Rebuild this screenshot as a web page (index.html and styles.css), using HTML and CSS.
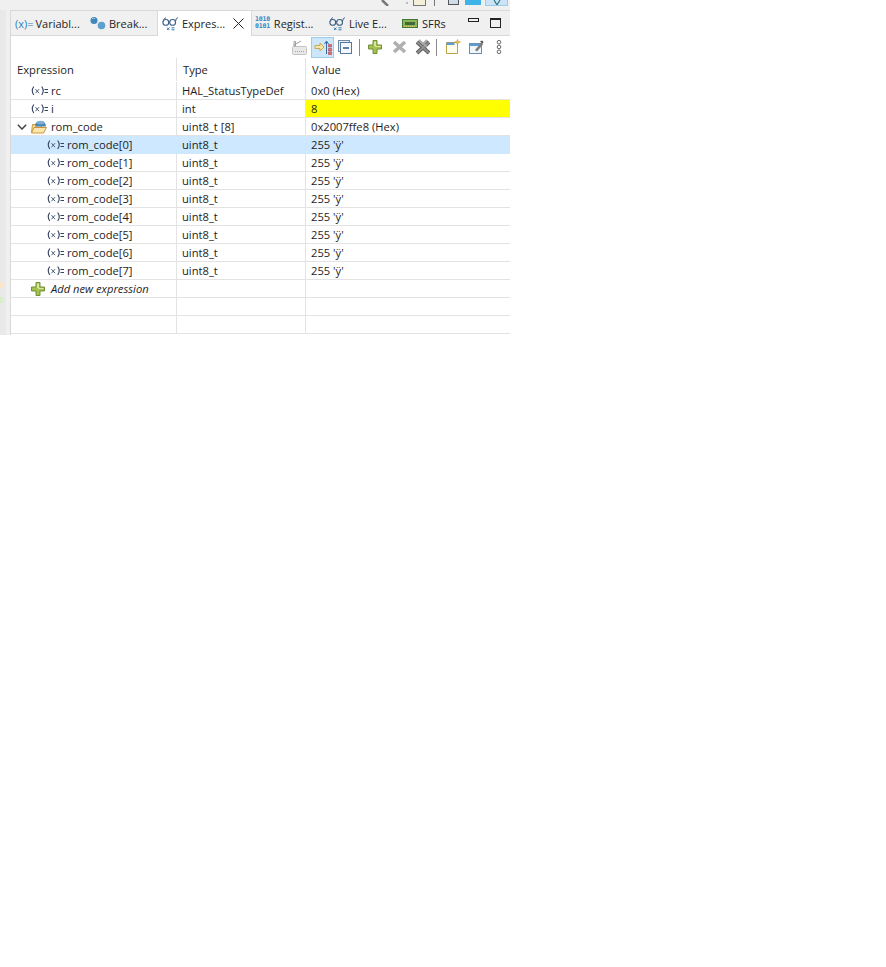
FILE: index.html
```html
<!DOCTYPE html>
<html lang="en">
<head>
<meta charset="utf-8">
<title>Expressions</title>
<link rel="stylesheet" href="styles.css">
</head>
<body>
<svg class="defs" width="0" height="0" aria-hidden="true">
  <symbol id="var" viewBox="0 0 17 10">
    <path d="M2.800.5C1 3 1 6.500 2.800 9M10.700.5c1.800 2.500 1.800 6 0 8.500" fill="none" stroke="#33445f" stroke-width="1.100"/>
    <path d="M4.500 3.200l3.500 4M8 3.200 4.500 7.200" stroke="#4a5a74" stroke-width="1"/>
    <path d="M13.500 3.500h3.500M13.500 6.500h3.500" stroke="#33445f" stroke-width="1"/>
  </symbol>
  <symbol id="glasses" viewBox="0 0 16 15">
    <circle cx="3.800" cy="6.400" r="2.900" fill="none" stroke="#3d5f86" stroke-width="1.100"/>
    <circle cx="10.600" cy="6.400" r="2.900" fill="none" stroke="#3d5f86" stroke-width="1.100"/>
    <path d="M6.700 5.600h1M1 5.500 2.500 2.500l1.500-.8M13.400 5.500l1-3 1.500-.8" fill="none" stroke="#3d5f86"/>
    <path d="M5 11.500l2.400 2.500M7.400 11.500 5 14M9.500 11.800h3M9.500 13.800h3" stroke="#2f78b0" stroke-width="1"/>
  </symbol>
  <symbol id="plus" viewBox="0 0 14 14">
    <path d="M5 .5h4v4.500h4.500v4H9v4.500H5V9H.5V5H5z" fill="#a5c04e" stroke="#71913a"/>
    <path d="M6 1.500h2v4.500h4.500v1H7V6H6z" fill="#dbe99c"/>
  </symbol>
</svg>
<div class="app">
  <div class="topstrip">
    <svg class="ts-a" width="10" height="6" viewBox="0 0 10 6"><path d="M1 0l6 6" stroke="#777" stroke-width="2.500"/></svg>
    <i class="ts-dot"></i>
    <i class="ts-box"></i>
    <i class="ts-sep"></i>
    <i class="ts-view"></i>
    <i class="ts-blue"></i>
    <i class="ts-sel"><svg width="8" height="5" viewBox="0 0 8 5"><path d="M1 0l3 5 3-5" fill="none" stroke="#2f7a78" stroke-width="1.200"/></svg></i>
  </div>
  <div class="main">
    <div class="gutter">
      <i class="mark mark-o"></i>
      <i class="mark mark-g"></i>
    </div>
    <div class="panel">
      <div class="tabs">
        <div class="tab tab-var"><span>Variabl...</span></div>
        <div class="tab tab-brk">
          <svg width="16" height="14" viewBox="0 0 16 14"><circle cx="4" cy="4.500" r="3.500" fill="#3f86bb"/><circle cx="11.500" cy="9.500" r="3.800" fill="#5d9fcd"/><path d="M2 3a2.500 2.500 0 0 1 3-.5" stroke="#a9d0ea" fill="none"/></svg>
          <span>Break...</span>
        </div>
        <div class="tab tab-active">
          <svg width="16" height="15"><use href="#glasses"/></svg>
          <span>Expres...</span>
          <svg class="close" width="11" height="11" viewBox="0 0 11 11"><path d="M.5.500l10 10M10.500.500l-10 10" stroke="#222" stroke-width="1"/></svg>
        </div>
        <div class="tab tab-reg"><span class="binary">1010<br>0101</span><span>Regist...</span></div>
        <div class="tab tab-live"><svg width="16" height="15"><use href="#glasses"/></svg><span>Live E...</span></div>
        <div class="tab tab-sfr">
          <svg width="16" height="9" viewBox="0 0 16 9"><rect x=".5" y=".5" width="15" height="8" fill="#8fb35a" stroke="#3f7a34"/><path d="M3 3h10v3H3z" fill="#3f6a34"/><path d="M2 7.500h12" stroke="#d9c66a" stroke-dasharray="1 1"/></svg>
          <span>SFRs</span>
        </div>
        <div class="winbtns">
          <i class="btn-min"></i>
          <i class="btn-max"></i>
        </div>
      </div>
      <div class="toolbar">
        <svg class="t-a" width="16" height="15" viewBox="0 0 16 15"><rect x="1.500" y="6.500" width="14" height="8" rx="1" fill="#e8e8e8" stroke="#c4c4c4"/><path d="M3 1.500h1.500V6H3zM3 5l7-4" stroke="#a0a0a0" fill="none"/><path d="M4 11.500h9" stroke="#a8a8a8" stroke-dasharray="1 1"/></svg>
        <span class="t-sel">
          <svg width="18" height="15" viewBox="0 0 18 15"><path d="M1 5.500h5V3l4 4-4 4V8.500H1z" fill="#f5e7a6" stroke="#c9a94e"/><path d="M12.500 14V2M10.500 4l2-3 2 3" fill="none" stroke="#3a6f9a"/><path d="M14.500 4.500h3v2.500h-3zM14.500 8.500h3V11h-3zM14.500 12h3v2.500h-3z" fill="#e0707a" stroke="#b13f4c" stroke-width=".6"/></svg>
        </span>
        <svg class="t-b" width="14" height="14" viewBox="0 0 14 14"><rect x=".5" y=".5" width="11" height="11" fill="#e9eef4" stroke="#6f8aa8"/><rect x="2.500" y="2.500" width="11" height="11" fill="#f4f7fb" stroke="#56789c"/><path d="M5 8h6" stroke="#2b5b8a" stroke-width="1.500"/></svg>
        <i class="t-sep t-sep1"></i>
        <svg class="t-c" width="14" height="14"><use href="#plus"/></svg>
        <svg class="t-d" width="15" height="14" viewBox="0 0 15 14"><path d="M2 2l11 10M13 2 2 12" stroke="#b0b0b0" stroke-width="3.600"/></svg>
        <svg class="t-e" width="16" height="16" viewBox="0 0 16 16"><path d="M2 3l12 11M14 3 2 14" stroke="#5f5f5f" stroke-width="3.800"/><path d="M2 3l12 11M14 3 2 14" stroke="#8f8f8f" stroke-width="1.800"/><path d="M4 1 12 8M12 1 8 5" stroke="#a8a8a8" stroke-width="2"/></svg>
        <i class="t-sep t-sep2"></i>
        <svg class="t-f" width="16" height="16" viewBox="0 0 16 16"><path d="M1.500 3.500h11v11h-11z" fill="#fdfbe9" stroke="#b8a24a"/><path d="M1.500 3.500h8v2.500h-8z" fill="#5f9bd0"/><path d="M12.500 .5l.8 2 2.200.5-2.200.8-.8 2-.8-2-2-.8 2-.5z" fill="#f2c63d" stroke="#b58a1e" stroke-width=".5"/></svg>
        <svg class="t-g" width="15" height="14" viewBox="0 0 15 14"><rect x=".5" y="3.500" width="12" height="10" fill="#f1f6fb" stroke="#6f8aa8"/><path d="M.5 3.500h12v2.500H.5z" fill="#5f9bd0"/><path d="M6 10l6-7 2 1.500-6 7z" fill="#7d7d7d"/><path d="M11 1.500l2-1 1.500 1.500-1 2z" fill="#555"/></svg>
        <svg class="t-h" width="6" height="14" viewBox="0 0 6 14"><circle cx="3" cy="2.200" r="1.800" fill="#fff" stroke="#666"/><circle cx="3" cy="7" r="1.800" fill="#fff" stroke="#666"/><circle cx="3" cy="11.800" r="1.800" fill="#fff" stroke="#666"/></svg>
      </div>
      <div class="table">
        <div class="row head"><div class="cell c1">Expression</div><div class="cell c2">Type</div><div class="cell c3">Value</div></div>
        <div class="row"><div class="cell c1 l1"><svg class="v" width="17" height="10"><use href="#var"/></svg>rc</div><div class="cell c2">HAL_StatusTypeDef</div><div class="cell c3">0x0 (Hex)</div></div>
        <div class="row"><div class="cell c1 l1"><svg class="v" width="17" height="10"><use href="#var"/></svg>i</div><div class="cell c2">int</div><div class="cell c3 changed">8</div></div>
        <div class="row"><div class="cell c1 l0">
          <svg class="chev" width="10" height="6" viewBox="0 0 10 6"><path d="M.8.800 5 5l4.200-4.200" fill="none" stroke="#444" stroke-width="1.500"/></svg>
          <svg class="folder" width="16" height="15" viewBox="0 0 16 15"><path d="M.5 13.500l1-8h3l1-1.500h5v9.500z" fill="#f6dc98" stroke="#c9973a"/><path d="M.5 14 3 8.500h12.500l-3 5.500z" fill="#fbe7ae" stroke="#c9973a"/><path d="M4 7.500a5 5 0 0 1 11 0z" fill="#4a86b8"/><ellipse cx="9.500" cy="3.500" rx="4" ry="1.800" fill="#7fb0d6"/></svg>
          rom_code</div><div class="cell c2">uint8_t [8]</div><div class="cell c3">0x2007ffe8 (Hex)</div></div>
        <div class="row selected"><div class="cell c1 l2"><svg class="v" width="17" height="10"><use href="#var"/></svg>rom_code[0]</div><div class="cell c2">uint8_t</div><div class="cell c3">255 'ÿ'</div></div>
        <div class="row"><div class="cell c1 l2"><svg class="v" width="17" height="10"><use href="#var"/></svg>rom_code[1]</div><div class="cell c2">uint8_t</div><div class="cell c3">255 'ÿ'</div></div>
        <div class="row"><div class="cell c1 l2"><svg class="v" width="17" height="10"><use href="#var"/></svg>rom_code[2]</div><div class="cell c2">uint8_t</div><div class="cell c3">255 'ÿ'</div></div>
        <div class="row"><div class="cell c1 l2"><svg class="v" width="17" height="10"><use href="#var"/></svg>rom_code[3]</div><div class="cell c2">uint8_t</div><div class="cell c3">255 'ÿ'</div></div>
        <div class="row"><div class="cell c1 l2"><svg class="v" width="17" height="10"><use href="#var"/></svg>rom_code[4]</div><div class="cell c2">uint8_t</div><div class="cell c3">255 'ÿ'</div></div>
        <div class="row"><div class="cell c1 l2"><svg class="v" width="17" height="10"><use href="#var"/></svg>rom_code[5]</div><div class="cell c2">uint8_t</div><div class="cell c3">255 'ÿ'</div></div>
        <div class="row"><div class="cell c1 l2"><svg class="v" width="17" height="10"><use href="#var"/></svg>rom_code[6]</div><div class="cell c2">uint8_t</div><div class="cell c3">255 'ÿ'</div></div>
        <div class="row"><div class="cell c1 l2"><svg class="v" width="17" height="10"><use href="#var"/></svg>rom_code[7]</div><div class="cell c2">uint8_t</div><div class="cell c3">255 'ÿ'</div></div>
        <div class="row"><div class="cell c1 l-add"><svg class="add" width="14" height="14"><use href="#plus"/></svg><em>Add new expression</em></div><div class="cell c2"></div><div class="cell c3"></div></div>
        <div class="row"><div class="cell c1"></div><div class="cell c2"></div><div class="cell c3"></div></div>
        <div class="row"><div class="cell c1"></div><div class="cell c2"></div><div class="cell c3"></div></div>
      </div>
    </div>
  </div>
</div>
</body>
</html>
```
FILE: styles.css
```css
* { box-sizing: border-box; }
html, body { margin: 0; padding: 0; background: #fff; }
body { font-family: "Open Sans", "Noto Sans", sans-serif; font-size: 11.2px; color: #1e1e1e; }
i { display: block; font-style: normal; }
.defs { display: block; height: 0; }

.app { width: 510px; height: 335px; background: #f0f0f0; display: flex; flex-direction: column; overflow: hidden; }

.topstrip { height: 10px; display: flex; align-items: flex-start; flex: none; }
.ts-a { margin-left: 381px; }
.ts-dot { width: 2px; height: 2px; margin: 2px 0 0 15px; background: #bbb; }
.ts-box { width: 13px; height: 6px; margin-left: 5px; border: 1px solid #777; border-top: 0; background: #f6efd8; }
.ts-sep { width: 1px; height: 6px; margin-left: 8px; background: #777; }
.ts-view { width: 11px; height: 5px; margin-left: 13px; border: 1px solid #555; border-top: 0; background: #cfdcea; }
.ts-blue { width: 16px; height: 5px; margin-left: 6px; background: #3cb4e7; }
.ts-sel { width: 23px; height: 6px; margin-left: 4px; background: #cbe4f7; border: 1px solid #9fcbea; border-top: 0; display: flex; justify-content: center; }

.main { flex: 1; display: flex; min-height: 0; }
.gutter { width: 10px; flex: none; border-left: 6px solid #e9e9e9; position: relative; }
.mark { position: absolute; left: -6px; width: 3px; height: 6px; }
.mark-o { top: 272px; background: #fbe6c9; }
.mark-g { top: 287px; background: #d9edc9; }

.panel { flex: 1; display: flex; flex-direction: column; min-width: 0; background: #fff; border-left: 1px solid #d9d9d9; }

.tabs { height: 26px; flex: none; display: flex; align-items: stretch; background: #f0f0f0; border-top: 1px solid #d9d9d9; border-bottom: 1px solid #d9d9d9; }
.tab { display: flex; align-items: center; gap: 4px; white-space: nowrap; font-size: 11px; }
.tab-var { width: 74px; padding-left: 4px; gap: 2px; }
.tab-brk { width: 72px; padding-left: 5px; gap: 3px; }
.tab-active { width: 95px; padding-left: 4px; gap: 4px; background: #fff; margin-bottom: -1px; border-left: 1px solid #d9d9d9; border-right: 1px solid #d9d9d9; }
.close { margin-left: 4px; }
.tab-reg { width: 74px; padding-left: 3px; }
.tab-live { width: 73px; padding-left: 3px; }
.tab-sfr { width: 69px; padding-left: 3px; }
.binary { font-family: "DejaVu Sans Mono", monospace; font-size: 6.5px; line-height: 7px; font-weight: 700; color: #2f86c1; letter-spacing: -.2px; }
.tab-var::before { content: "(x)="; color: #2e7fbb; font-size: 11px; }

.winbtns { display: flex; align-items: center; }
.btn-min { width: 11px; height: 4px; margin-top: -6px; border: 1px solid #222; }
.btn-max { width: 11px; height: 10px; margin-left: 11px; border: 1px solid #222; border-top-width: 2px; }

.toolbar { height: 22px; flex: none; display: flex; align-items: center; background: #fff; padding-left: 280px; }
.t-sel { width: 23px; height: 21px; margin-left: 4px; display: flex; align-items: center; justify-content: center; background: #cde6f9; border: 1px solid #9ccbec; }
.t-b { margin-left: 4px; }
.t-sep { width: 1px; height: 17px; background: #8a8a8a; }
.t-sep1 { margin-left: 7px; }
.t-c { margin-left: 8px; }
.t-d { margin-left: 10px; }
.t-e { margin-left: 8px; }
.t-sep2 { margin-left: 5px; }
.t-f { margin-left: 8px; }
.t-g { margin-left: 8px; }
.t-h { margin-left: 12px; }

.table { flex: 1; display: flex; flex-direction: column; }
.row { height: 18px; display: flex; border-bottom: 1px solid #e3e3e3; flex: none; }
.row.head { height: 24px; border-bottom: 0; padding-bottom: 1px; }
.row.selected { background: #cde8ff; border-bottom-color: #cde8ff; }
.cell { display: flex; align-items: center; white-space: nowrap; overflow: hidden; border-right: 1px solid #e3e3e3; padding-left: 5px; }
.row.selected .cell { border-right-color: #cde8ff; }
.c1 { width: 166px; padding-left: 6px; flex: none; }
.c2 { width: 129px; flex: none; }
.c3 { flex: 1; border-right: 0; }
.head .c2 { padding-left: 6px; }
.head .c3 { padding-left: 6px; }
.changed { background: #ffff00; }
.l1 { padding-left: 20px; }
.l2 { padding-left: 36px; }
.l0 { padding-left: 6px; }
.v { margin-right: 3px; flex: none; }
.chev { margin-right: 4px; flex: none; }
.folder { margin-right: 4px; flex: none; }
.l-add { padding-left: 20px; }
.add { margin-right: 6px; flex: none; }
em { font-style: italic; }
```
